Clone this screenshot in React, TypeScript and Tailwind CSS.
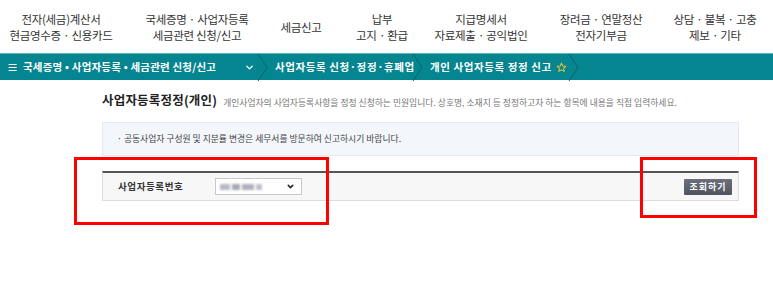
import { ChevronDown } from "lucide-react";

const menus = [
  { l1: "전자(세금)계산서", l2: "현금영수증 · 신용카드", w: "w-[122px]" },
  { l1: "국세증명 · 사업자등록", l2: "세금관련 신청/신고", w: "w-[150px]" },
  { l1: "세금신고", l2: "", w: "w-[58px]" },
  { l1: "납부", l2: "고지 · 환급", w: "w-[104px]" },
  { l1: "지급명세서", l2: "자료제출 · 공익법인", w: "w-[94px]" },
  { l1: "장려금 · 연말정산", l2: "전자기부금", w: "w-[146px]" },
  { l1: "상담 · 불복 · 고충", l2: "제보 · 기타", w: "w-[82px]" },
];

function Sep() {
  return (
    <svg width="12" height="27" viewBox="0 0 12 27" className="shrink-0">
      <path d="M1 0 L10 13.5 L1 27" fill="none" stroke="#04646d" strokeWidth="1" />
    </svg>
  );
}

export default function App() {
  return (
    <div
      className="w-[773px] h-[302px] bg-white overflow-hidden text-[#333]"
      style={{ fontFamily: '"Noto Sans CJK KR", "Noto Sans", sans-serif' }}
    >
      {/* top menu */}
      <div className="h-[53px] flex items-center">
        {menus.map((m) => (
          <div
            key={m.l1}
            className={`${m.w} shrink-0 flex flex-col items-center justify-center whitespace-nowrap text-[11.5px] leading-[16px] tracking-[-0.3px] text-[#333]`}
          >
            <span>{m.l1}</span>
            {m.l2 && <span>{m.l2}</span>}
          </div>
        ))}
      </div>

      {/* breadcrumb bar */}
      <div className="h-[27px] bg-[#058590] border-t border-[#5fb8bf] flex items-center text-white text-[10.5px] font-bold tracking-[0.2px] whitespace-nowrap">
        <span className="pl-[7px] w-[23px] text-[11px]">≡</span>
        <span className="w-[221px]">국세증명 • 사업자등록 • 세금관련 신청/신고</span>
        <ChevronDown size={11} strokeWidth={3} className="mr-[2px]" />
        <Sep />
        <span className="ml-[6px] w-[137px] tracking-[0.6px]">사업자등록 신청·정정·휴폐업</span>
        <Sep />
        <span className="ml-[6px] tracking-[0.6px]">개인 사업자등록 정정 신고</span>
        <svg width="11" height="11" viewBox="0 0 24 24" className="ml-[4px] mr-[1px]">
          <path
            d="M12 2.5l2.9 6.2 6.6.7-5 4.5 1.4 6.6L12 17.2l-5.9 3.3 1.4-6.6-5-4.5 6.6-.7z"
            fill="none"
            stroke="#e8c53a"
            strokeWidth="2.2"
            strokeLinejoin="round"
          />
        </svg>
        <Sep />
      </div>

      {/* content */}
      <div className="pl-[102px] pr-[34px]">
        <div className="flex items-end h-[34px] pb-[4px]">
          <span className="text-[12.5px] font-bold text-[#222] tracking-[0.2px]">사업자등록정정(개인)</span>
          <span className="ml-[6px] text-[8.8px] text-[#777] mb-[1px] whitespace-nowrap">
            개인사업자의 사업자등록사항을 정정 신청하는 민원입니다. 상호명, 소재지 등 정정하고자 하는 항목에 내용을 직접 입력하세요.
          </span>
        </div>

        <div className="mt-[8px] h-[34px] bg-[#f3f6fa] border border-[#e4e9f0] flex items-center pl-[14px] text-[8.8px] text-[#444]">
          · 공동사업자 구성원 및 지분률 변경은 세무서를 방문하여 신고하시기 바랍니다.
        </div>

        <div className="relative mt-[15px] h-[30px] bg-[#f7f7f7] border-t-2 border-t-[#555] border-b border-x border-[#ddd] flex items-center">
          <span className="ml-[15px] w-[97px] text-[9.5px] font-bold text-[#333] tracking-[0.6px]">사업자등록번호</span>
          <div className="w-[87px] h-[17px] bg-white border border-[#c8c8c8] flex items-center justify-between px-[4px]">
            <div className="flex gap-[2px] blur-[1.2px]">
              <span className="w-[10px] h-[6px] bg-[#b8b8c4]" />
              <span className="w-[8px] h-[6px] bg-[#a8a8b6]" />
              <span className="w-[12px] h-[6px] bg-[#b0b0bc]" />
              <span className="w-[6px] h-[6px] bg-[#c0c0cc]" />
            </div>
            <ChevronDown size={9} strokeWidth={4} className="text-[#222] mr-[2px]" />
          </div>
          <button className="ml-auto mr-[6px] h-[16px] w-[48px] bg-gradient-to-b from-[#6b707b] to-[#4f5460] text-white text-[9px] font-bold tracking-[1px] rounded-[1px]">
            조회하기
          </button>

          {/* highlight boxes */}
          <div className="absolute left-[-29px] top-[-16px] w-[255px] h-[68px] border-[3px] border-[#ff0000]" />
          <div className="absolute left-[537px] top-[-16px] w-[117px] h-[61px] border-[3px] border-[#ff0000]" />
        </div>
      </div>
    </div>
  );
}
